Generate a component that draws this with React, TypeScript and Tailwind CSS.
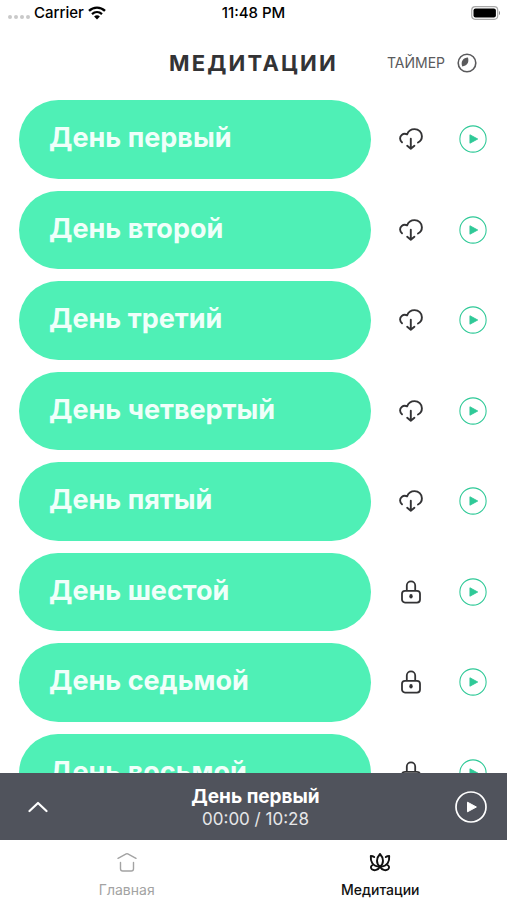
import { useState } from 'react';
import clsx from 'clsx';

type Meditation = {
  id: number;
  title: string;
  locked: boolean;
};

const meditations: Meditation[] = [
  { id: 1, title: 'День первый', locked: false },
  { id: 2, title: 'День второй', locked: false },
  { id: 3, title: 'День третий', locked: false },
  { id: 4, title: 'День четвертый', locked: false },
  { id: 5, title: 'День пятый', locked: false },
  { id: 6, title: 'День шестой', locked: true },
  { id: 7, title: 'День седьмой', locked: true },
  { id: 8, title: 'День восьмой', locked: true },
];

function WifiIcon() {
  return (
    <svg width="18" height="14" viewBox="0 0 18 14" fill="none" aria-hidden="true">
      <path d="M1 4.8C5.5.5 12.5.5 17 4.8" stroke="#000" strokeWidth="2.4" />
      <path d="M4 8.1c2.9-2.7 7.1-2.7 10 0" stroke="#000" strokeWidth="2.2" />
      <path d="M9 13.5 6.1 10.4c1.7-1.5 4.1-1.5 5.8 0Z" fill="#000" />
    </svg>
  );
}

function BatteryIcon() {
  return (
    <svg width="30" height="14" viewBox="0 0 30 14" fill="none" aria-hidden="true">
      <rect x="0.7" y="0.7" width="26" height="12.6" rx="3.5" stroke="#a9a9a9" strokeWidth="1.2" />
      <rect x="2.5" y="2.4" width="22.4" height="9.2" rx="2" fill="#000" />
      <path d="M28 5v4c1.3-.4 1.3-3.6 0-4Z" fill="#888" />
    </svg>
  );
}

function TimerIcon() {
  return (
    <svg width="20" height="20" viewBox="0 0 20 20" fill="none" aria-hidden="true">
      <circle cx="10" cy="10" r="8.8" stroke="#5a5a5c" strokeWidth="1.6" />
      <path
        d="M11 4.5c.7 2.800.4 5-.7 6.300-1 1.300-2.700 2.200-5 2.600-1-2.400-.8-4.600.3-6.200C6.700 5.600 8.600 4.600 11 4.500Z"
        fill="#5a5a5c"
      />
    </svg>
  );
}

function CloudDownloadIcon() {
  return (
    <svg
      width="24"
      height="22"
      viewBox="0 0 24 22"
      fill="none"
      stroke="#333335"
      strokeWidth="1.9"
      strokeLinecap="round"
      strokeLinejoin="round"
      aria-hidden="true"
    >
      <path d="M3 14.3C.6 12.3.4 8.6 2.7 6.9 4.3 5.7 6.4 5.6 8.1 6.300 9.300 3.100 12.200 1.100 15.600 1.100c4 0 7.300 3.200 7.300 7.100 0 2.700-1.500 5.100-3.900 6.300" />
      <path d="M11.8 10.8v9.900M8.200 17.800l3.600 3 3.600-3" />
    </svg>
  );
}

function LockIcon() {
  return (
    <svg width="20" height="24" viewBox="0 0 20 24" fill="none" stroke="#333335" strokeWidth="1.8" aria-hidden="true">
      <rect x="1" y="10.8" width="18" height="11.8" rx="3" />
      <path d="M5.8 10.8V5.6a4.2 4.2 0 0 1 8.4 0v5.2" />
      <ellipse cx="10" cy="16.2" rx="1.7" ry="2.2" fill="#333335" stroke="none" />
    </svg>
  );
}

function PlayIcon({ className, bold }: { className: string; bold?: boolean }) {
  return (
    <svg className={className} viewBox="0 0 32 32" fill="none" aria-hidden="true">
      <circle cx="16" cy="16" r="15" stroke="currentColor" strokeWidth={bold ? 1.7 : 1.2} />
      <path d="M12.5 11.200v9.600l8.900-4.800Z" fill="currentColor" stroke="currentColor" strokeLinejoin="round" />
    </svg>
  );
}

function ChevronUpIcon() {
  return (
    <svg width="20" height="12" viewBox="0 0 20 12" fill="none" aria-hidden="true">
      <path d="m1.5 10 8.500-8 8.500 8" stroke="#fff" strokeWidth="2.2" strokeLinecap="round" strokeLinejoin="round" />
    </svg>
  );
}

function HomeIcon() {
  return (
    <svg
      width="20"
      height="20"
      viewBox="0 0 20 20"
      fill="none"
      stroke="currentColor"
      strokeWidth="1.4"
      strokeLinecap="round"
      strokeLinejoin="round"
      className="shrink-0"
      aria-hidden="true"
    >
      <path d="m1 6.300 8.200-4.400q.8-.4 1.600 0L19 6.300" />
      <path d="M3.500 10.500v6.200q0 2.300 2.300 2.300h8.400q2.300 0 2.300-2.300v-6.200" />
    </svg>
  );
}

function LotusIcon() {
  return (
    <svg
      width="22"
      height="20"
      viewBox="0 0 22 20"
      fill="none"
      stroke="currentColor"
      strokeWidth="1.9"
      strokeLinecap="round"
      strokeLinejoin="round"
      className="shrink-0"
      aria-hidden="true"
    >
      <path d="M11 2C8.900 4.300 8 6.500 8 8.700c0 2.500 1.100 4.500 3 6.100 1.900-1.600 3-3.600 3-6.100C14 6.500 13.100 4.300 11 2Z" />
      <path d="M5.200 5.100C4.200 4.300 3.100 4 1.800 4c-.2 2.900.2 5.200 1.400 7 1.500 2.300 4.100 3.600 7.800 3.800 3.700-.2 6.300-1.500 7.800-3.800 1.200-1.800 1.600-4.100 1.400-7-1.300 0-2.400.3-3.400 1.100" />
      <path d="M3.200 13.200c-1.600 1-1.700 2.900-.3 4.100 2.400 1.800 6.200.8 8.100-2.500 1.900 3.300 5.700 4.300 8.100 2.500 1.400-1.200 1.300-3.100-.3-4.100" />
    </svg>
  );
}

function StatusBar() {
  return (
    <div className="grid grid-cols-3 items-center px-1.5 pt-px text-[15px] leading-6 font-medium text-black">
      <div className="flex items-center gap-1 pl-0.5">
        <span className="flex gap-0.5 pt-2" aria-hidden="true">
          {[0, 1, 2, 3].map((dot) => (
            <span key={dot} className="size-1 rounded-full bg-[#c9c9c9]" />
          ))}
        </span>
        <span>Carrier</span>
        <WifiIcon />
      </div>
      <span className="text-center">11:48 PM</span>
      <div className="flex justify-end">
        <BatteryIcon />
      </div>
    </div>
  );
}

function MeditationRow({ meditation, onPlay }: { meditation: Meditation; onPlay: () => void }) {
  const { title, locked } = meditation;
  return (
    <li className="flex items-center">
      <button
        type="button"
        onClick={onPlay}
        className="flex-1 rounded-full bg-[#4ff0b6] pt-[18px] pr-4 pb-5 pl-[30px] text-left text-[27px] leading-normal font-bold text-[#f0fffa]"
      >
        {title}
      </button>
      <button
        type="button"
        aria-label={locked ? `${title}: недоступно` : `Скачать: ${title}`}
        className="mr-2 flex w-20 justify-center"
      >
        {locked ? <LockIcon /> : <CloudDownloadIcon />}
      </button>
      <button type="button" aria-label={`Слушать: ${title}`} onClick={onPlay} className="text-[#2fc997]">
        <PlayIcon className="size-7" />
      </button>
    </li>
  );
}

export default function App() {
  const [current, setCurrent] = useState<Meditation>(meditations[0]);
  const [tab, setTab] = useState<'home' | 'meditations'>('meditations');

  const tabClass = (active: boolean) =>
    clsx(
      'flex flex-1 flex-col items-center gap-2 pt-3 text-sm leading-5',
      active ? 'font-medium text-[#111111]' : 'text-[#a3a3a3]',
    );

  return (
    <div className="flex h-screen flex-col overflow-hidden bg-white font-['Inter','Liberation_Sans',sans-serif]">
      <StatusBar />

      <header className="grid grid-cols-[1fr_auto_1fr] items-center pt-[22px] pr-[30px] pb-[21px] pl-[30px]">
        <h1 className="col-start-2 text-[22px] leading-8 font-bold tracking-widest text-[#333335]">
          МЕДИТАЦИИ
        </h1>
        <button
          type="button"
          className="flex items-center gap-3 justify-self-end text-sm text-[#5a5a5c]"
        >
          ТАЙМЕР
          <TimerIcon />
        </button>
      </header>

      <main className="min-h-0 flex-1 overflow-y-auto [scrollbar-width:none]">
        <ul className="flex flex-col gap-3 pr-5 pl-[19px]">
          {meditations.map((m) => (
            <MeditationRow key={m.id} meditation={m} onPlay={() => setCurrent(m)} />
          ))}
        </ul>
      </main>

      <section
        aria-label="Плеер"
        className="flex items-center justify-between bg-[#50535c] pt-3 pr-5 pb-[11px] pl-7 text-white"
      >
        <button type="button" aria-label="Развернуть плеер" className="flex w-7">
          <ChevronUpIcon />
        </button>
        <div className="text-center">
          <p className="text-[19px] leading-6 font-bold">{current.title}</p>
          <p className="text-[17px] leading-5 text-[#e6e6e8]">00:00 / 10:28</p>
        </div>
        <button type="button" aria-label="Воспроизвести">
          <PlayIcon className="size-8" bold />
        </button>
      </section>

      <nav className="flex bg-white">
        <a href="#home" onClick={() => setTab('home')} className={tabClass(tab === 'home')}>
          <HomeIcon />
          Главная
        </a>
        <a
          href="#meditations"
          aria-current={tab === 'meditations' ? 'page' : undefined}
          onClick={() => setTab('meditations')}
          className={tabClass(tab === 'meditations')}
        >
          <LotusIcon />
          Медитации
        </a>
      </nav>
    </div>
  );
}
